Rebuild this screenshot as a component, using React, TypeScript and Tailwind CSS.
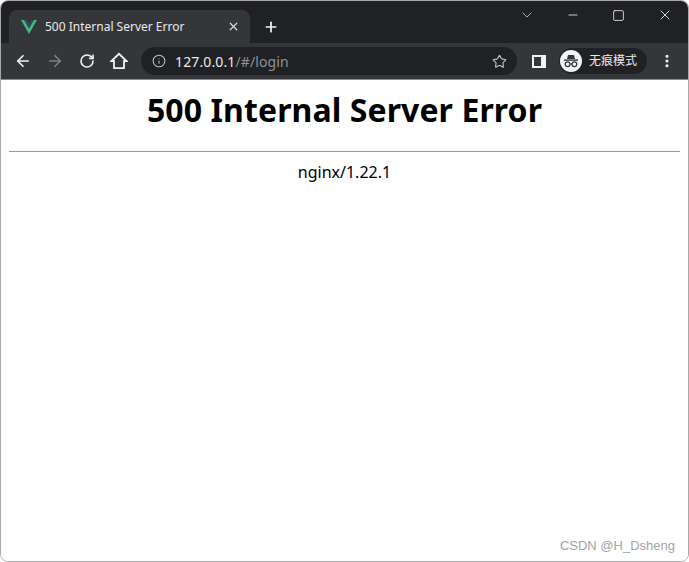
import { ArrowLeft, ArrowRight, RotateCw, Star, Info, X, Plus, ChevronDown, Minus, Square, EllipsisVertical } from "lucide-react";

/** Vue logo used as the tab favicon. */
function VueIcon() {
  return (
    <svg width="16" height="14" viewBox="0 0 16 14">
      <path d="M0 0H3.2L8 8.4L12.8 0H16L8 14Z" fill="#41b883" />
      <path d="M3.2 0H5.8L8 3.9L10.2 0H12.8L8 8.4Z" fill="#35495e" />
    </svg>
  );
}

function HomeIcon() {
  return (
    <svg width="18" height="18" viewBox="0 0 18 18" fill="none" stroke="#f1f3f4" strokeWidth="1.8">
      <path d="M1.5 9L9 1.8L16.5 9H14V16.2H4V9Z" strokeLinejoin="miter" />
    </svg>
  );
}

/** Side panel toggle: white box with a dark left half. */
function SidePanelIcon() {
  return (
    <div className="flex h-[13px] w-[14px] border-2 border-[#f1f3f4] bg-[#f1f3f4]">
      <div className="w-[7px] bg-[#35363a]" />
    </div>
  );
}

function IncognitoIcon() {
  return (
    <svg width="16" height="16" viewBox="0 0 16 16" fill="none">
      <path d="M4 6L5 2H11L12 6Z" fill="#35363a" />
      <rect x="1" y="6.4" width="14" height="1.4" fill="#35363a" />
      <circle cx="4.6" cy="11.2" r="2.4" stroke="#35363a" strokeWidth="1.2" />
      <circle cx="11.4" cy="11.2" r="2.4" stroke="#35363a" strokeWidth="1.2" />
      <path d="M7 11H9" stroke="#35363a" strokeWidth="1.2" />
    </svg>
  );
}

export default function App() {
  return (
    <div className="h-[562px] w-[689px] overflow-hidden bg-white font-['Noto_Sans','Noto_Sans_CJK_SC',sans-serif]">
      <div className="flex h-full flex-col overflow-hidden rounded-[8px] border border-[#a8a8a8]">
        {/* Tab strip */}
        <div className="flex h-[42px] shrink-0 items-end bg-[#202124] pl-[8px]">
          <div className="flex h-[33px] w-[241px] items-center rounded-t-[8px] bg-[#35363a] pl-[12px] pr-[10px]">
            <VueIcon />
            <span className="ml-[8px] flex-1 text-[12px] whitespace-nowrap text-[#e8eaed]">500 Internal Server Error</span>
            <X size={13} strokeWidth={2.2} color="#dadce0" />
          </div>
          <div className="ml-[13px] flex h-[33px] items-center">
            <Plus size={16} strokeWidth={2.6} color="#f1f3f4" />
          </div>
          <div className="mb-[18px] ml-auto flex h-[20px] items-center self-end">
            <ChevronDown size={16} strokeWidth={1.1} color="#dadce0" />
            <div className="ml-[31px]"><Minus size={14} strokeWidth={1.4} color="#f1f3f4" /></div>
            <div className="ml-[32px]"><Square size={13} strokeWidth={1.5} color="#f1f3f4" /></div>
            <div className="mr-[15px] ml-[32px]"><X size={16} strokeWidth={1.3} color="#f1f3f4" /></div>
          </div>
        </div>

        {/* Toolbar */}
        <div className="flex h-[36px] shrink-0 items-center bg-[#35363a] pl-[13px]">
          <ArrowLeft size={18} strokeWidth={2.2} color="#f1f3f4" />
          <div className="ml-[14px]"><ArrowRight size={18} strokeWidth={2.2} color="#7f8083" /></div>
          <div className="ml-[15px]"><RotateCw size={16} strokeWidth={2.4} color="#f1f3f4" /></div>
          <div className="ml-[15px]"><HomeIcon /></div>
          <div className="ml-[13px] flex h-[28px] w-[376px] items-center rounded-full bg-[#202124] pl-[11px] pr-[10px]">
            <Info size={14} strokeWidth={1.8} color="#bdc1c6" />
            <span className="ml-[9px] flex-1 text-[14px] tracking-[0.12px] whitespace-nowrap text-[#e8eaed]">
              127.0.0.1<span className="text-[#8f9296]">/#/login</span>
            </span>
            <Star size={15} strokeWidth={1.8} color="#bdc1c6" />
          </div>
          <div className="ml-[15px]"><SidePanelIcon /></div>
          <div className="ml-[13px] flex h-[26px] w-[88px] items-center rounded-full bg-[#202124] pl-[1px]">
            <div className="flex h-[22px] w-[22px] items-center justify-center rounded-full bg-[#f1f3f4]">
              <IncognitoIcon />
            </div>
            <span className="ml-[7px] text-[12px] whitespace-nowrap text-[#e8eaed]">无痕模式</span>
          </div>
          <div className="ml-[12px]"><EllipsisVertical size={16} strokeWidth={2.6} color="#f1f3f4" /></div>
        </div>

        {/* Page */}
        <div className="relative flex-1 border-t border-[#8c8c8c] bg-white text-black">
          <h1 className="mt-[8px] text-center text-[32px] leading-[44px] font-bold tracking-[0.09px]">500 Internal Server Error</h1>
          <div className="mx-[8px] mt-[19px] h-[1px] border-t border-[#9a9a9a]" />
          <p className="mt-[9px] text-center text-[16px] leading-[22px]">nginx/1.22.1</p>
          <span className="absolute right-[13px] bottom-[6px] font-['Liberation_Sans',sans-serif] text-[13px] text-[#a3a3a3]">CSDN @H_Dsheng</span>
        </div>
      </div>
    </div>
  );
}
